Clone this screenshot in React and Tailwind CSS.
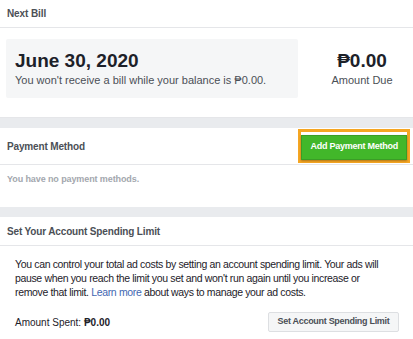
export default function App() {
  return (
    <div className="w-[413px] h-[339px] overflow-hidden bg-white text-[#1d2129] font-['Liberation_Sans',Arial,sans-serif]">
      {/* Next bill */}
      <div className="h-[28px] px-[7px] flex items-center border-b border-[#e5e6e9]">
        <span className="text-[10px] font-bold text-[#4b4f56] tracking-[-0.1px]">Next Bill</span>
      </div>
      <div className="h-[90px] px-[6px] pt-[11px] flex border-b border-[#e5e6e9]">
        <div className="w-[292px] h-[59px] bg-[#f5f6f7] rounded-[2px] px-[9px] flex flex-col justify-center">
          <div className="text-[19px] font-bold leading-[22px]">June 30, 2020</div>
          <div className="text-[11px] text-[#4b4f56] leading-[16px]">
            You won't receive a bill while your balance is ₱0.00.
          </div>
        </div>
        <div className="ml-[19px] flex-1 flex flex-col items-center justify-center h-[59px]">
          <div className="text-[19px] font-bold leading-[22px]">₱0.00</div>
          <div className="text-[11px] text-[#4b4f56] leading-[16px]">Amount Due</div>
        </div>
      </div>
      <div className="h-[10px] bg-[#e9ebee]" />

      {/* Payment method */}
      <div className="h-[37px] pl-[7px] pr-[3px] flex items-center justify-between border-b border-[#e5e6e9]">
        <span className="text-[10px] font-bold text-[#4b4f56] tracking-[-0.15px]">Payment Method</span>
        <div className="border-[3px] border-[#f5a623]">
          <button className="h-[25px] px-[8px] bg-[#42b72a] border border-[#3a9d26] text-white text-[9px] font-bold tracking-[-0.25px] shadow-[0_1px_2px_rgba(0,0,0,0.3)]">
            Add Payment Method
          </button>
        </div>
      </div>
      <div className="h-[42px] px-[7px] pt-[8px]">
        <div className="text-[9px] leading-[12px] font-bold text-[#a3a7ae] tracking-[-0.1px]">You have no payment methods.</div>
      </div>
      <div className="h-[10px] bg-[#e9ebee]" />

      {/* Spending limit */}
      <div className="h-[29px] px-[7px] flex items-center border-b border-[#e5e6e9]">
        <span className="text-[10px] font-bold text-[#4b4f56] tracking-[-0.15px]">Set Your Account Spending Limit</span>
      </div>
      <div className="px-[15px] pt-[11px]">
        <p className="text-[10.5px] leading-[14px] tracking-[-0.35px] text-[#1d2129] whitespace-nowrap">
          You can control your total ad costs by setting an account spending limit. Your ads will
          <br />
          pause when you reach the limit you set and won't run again until you increase or
          <br />
          remove that limit. <span className="text-[#4267b2]">Learn more</span> about ways to manage your ad costs.
        </p>
        <div className="mt-[13px] flex items-center justify-between">
          <span className="text-[10px]">
            Amount Spent: <span className="font-bold">₱0.00</span>
          </span>
          <button className="h-[20px] w-[131px] mr-[-1px] bg-[#f5f6f7] border border-[#dddfe2] rounded-[2px] text-[9px] font-bold tracking-[-0.3px] text-[#4b4f56]">
            Set Account Spending Limit
          </button>
        </div>
      </div>
    </div>
  );
}
